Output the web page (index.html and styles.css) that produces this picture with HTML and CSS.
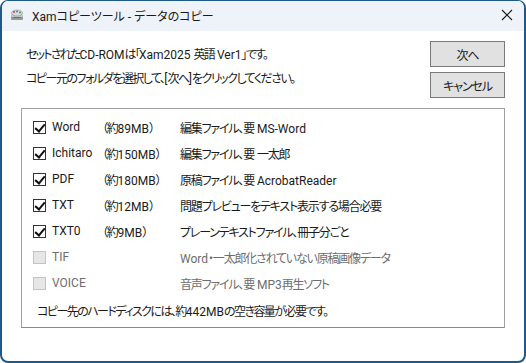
FILE: index.html
```html
<!DOCTYPE html>
<html lang="ja">
<head>
<meta charset="utf-8">
<title>Xamコピーツール - データのコピー</title>
<link rel="stylesheet" href="styles.css">
</head>
<body>
<div class="window">
  <div class="titlebar">
    <svg class="app-icon" width="14" height="14" viewBox="0 0 14 14">
      <rect x="1" y="7" width="12" height="5" rx="1" fill="#9a9a9a"/>
      <rect x="1" y="6" width="12" height="3" rx="1" fill="#c9c9c9"/>
      <ellipse cx="7" cy="5" rx="5.5" ry="3" fill="#dcdcdc" stroke="#8c8c8c" stroke-width="0.6"/>
      <circle cx="4" cy="4" r="1" fill="#d04040"/>
      <circle cx="7" cy="3.5" r="1" fill="#3f7fd0"/>
      <circle cx="10" cy="4.5" r="1" fill="#40a050"/>
      <rect x="3" y="9" width="8" height="1" fill="#6f6f6f"/>
    </svg>
    <span class="title">Xamコピーツール - データのコピー</span>
    <span class="close">
      <svg width="12" height="12" viewBox="0 0 12 12"><path d="M1 1 L11 11 M11 1 L1 11" stroke="#1a1a1a" stroke-width="1.1" fill="none"/></svg>
    </span>
  </div>
  <div class="content">
    <div class="top">
      <div class="intro">
        <div class="line first">セットされた<span class="en">CD-ROM</span>は「<span class="en">Xam2025 </span>英語<span class="en"> Ver1</span>」です。</div>
        <div class="line">コピー元のフォルダを選択して、<span class="en">[</span>次へ<span class="en">]</span>をクリックしてください。</div>
      </div>
      <div class="buttons">
        <button class="btn">次へ</button>
        <button class="btn">キャンセル</button>
      </div>
    </div>
    <div class="group">
      <div class="row"><span class="cb checked"></span><span class="name">Word</span><span class="size">（約<span class="en">89MB</span>）</span><span class="desc">編集ファイル、要<span class="en"> MS-Word</span></span></div>
      <div class="row"><span class="cb checked"></span><span class="name">Ichitaro</span><span class="size">（約<span class="en">150MB</span>）</span><span class="desc">編集ファイル、要<span class="en"> </span>一太郎</span></div>
      <div class="row"><span class="cb checked"></span><span class="name">PDF</span><span class="size">（約<span class="en">180MB</span>）</span><span class="desc">原稿ファイル、要<span class="en"> AcrobatReader</span></span></div>
      <div class="row"><span class="cb checked"></span><span class="name">TXT</span><span class="size">（約<span class="en">12MB</span>）</span><span class="desc">問題プレビューをテキスト表示する場合必要</span></div>
      <div class="row"><span class="cb checked"></span><span class="name">TXT0</span><span class="size">（約<span class="en">9MB</span>）</span><span class="desc">プレーンテキストファイル、冊子分ごと</span></div>
      <div class="row disabled"><span class="cb"></span><span class="name">TIF</span><span class="size"></span><span class="desc"><span class="en">Word</span>・一太郎化されていない原稿画像データ</span></div>
      <div class="row disabled"><span class="cb"></span><span class="name">VOICE</span><span class="size"></span><span class="desc">音声ファイル、要<span class="en"> MP3</span>再生ソフト</span></div>
      <div class="footer">コピー先のハードディスクには、約<span class="en">442MB</span>の空き容量が必要です。</div>
    </div>
  </div>
</div>
</body>
</html>
```
FILE: styles.css
```css
* { box-sizing: border-box; }
html, body { margin: 0; padding: 0; background: #ffffff; }
body {
  font-family: Roboto, "Noto Sans CJK JP", sans-serif;
  font-size: 12px;
  color: #1a1a1a;
  font-feature-settings: "palt";
}
.en { letter-spacing: 0; }
.window {
  width: 526px;
  height: 363px;
  border: 2px solid #1d5a8b;
  border-top-width: 1px;
  border-radius: 8px;
  background: #ffffff;
  overflow: hidden;
  display: flex;
  flex-direction: column;
}
.titlebar {
  height: 30px;
  background: #eef3f9;
  display: flex;
  align-items: center;
  padding-left: 8px;
  padding-bottom: 2px;
}
.app-icon { flex: none; }
.title {
  margin-left: 8px;
  font-size: 12px;
  color: #1a1a1a;
}
.close {
  margin-left: auto;
  width: 30px;
  display: flex;
  justify-content: center;
  margin-right: 2px;
}
.content {
  padding: 10px 19px 0 19px;
  letter-spacing: -1.2px;
}
.top {
  display: flex;
  justify-content: space-between;
  padding-left: 5px;
}
.intro { padding-top: 2px; letter-spacing: -1.5px; }
.line { line-height: 24px; height: 24px; }
.line.first { letter-spacing: -1.8px; }
.buttons {
  display: flex;
  flex-direction: column;
  gap: 5px;
}
.btn {
  width: 75px;
  height: 26px;
  background: #e1e1e1;
  border: 1px solid #7a7a7a;
  font: inherit;
  letter-spacing: -1.1px;
  color: #1a1a1a;
  padding: 0;
}
.group {
  margin-top: 10px;
  border: 1px solid #a0a0a0;
  border-bottom-color: #8a8a8a;
  padding: 5px 0 2px 11px;
  height: 220px;
}
.row {
  height: 26px;
  display: flex;
  align-items: center;
}
.cb {
  width: 13px;
  height: 13px;
  border: 1px solid #333333;
  background: #ffffff;
  flex: none;
  position: relative;
}
.cb.checked::after {
  content: "";
  position: absolute;
  left: 3px;
  top: 0px;
  width: 4px;
  height: 8px;
  border-right: 2px solid #111;
  border-bottom: 2px solid #111;
  transform: rotate(40deg);
}
.name { margin-left: 6px; width: 46px; flex: none; letter-spacing: 0; }
.size { width: 82px; flex: none; padding-left: 4px; }
.desc { flex: none; }
.disabled { color: #6d6d6d; }
.disabled .cb { background: #e6e6e6; border-color: #c4c4c4; }
.footer {
  margin-top: 3px;
  padding-left: 4px;
  line-height: 26px;
  letter-spacing: -1.55px;
}
```
